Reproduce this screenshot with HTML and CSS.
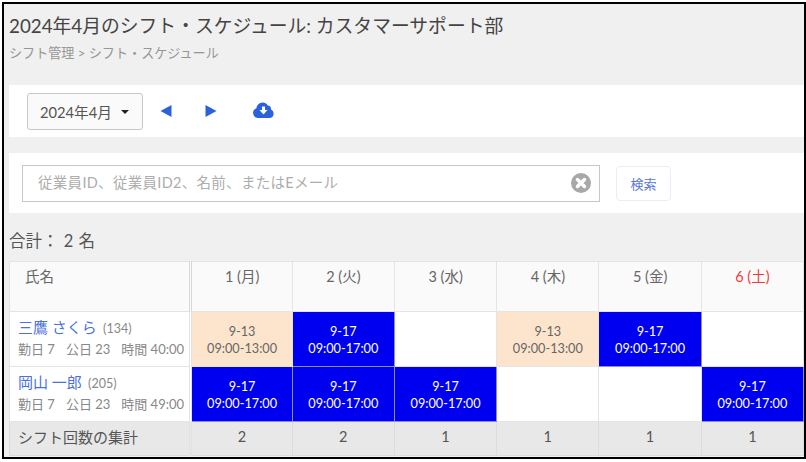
FILE: index.html
```html
<!DOCTYPE html>
<html lang="ja">
<head>
<meta charset="utf-8">
<title>シフト・スケジュール</title>
<link rel="stylesheet" href="styles.css">
</head>
<body>
<div class="frame">
  <header class="head">
    <h1 class="title">2024年4月のシフト・スケジュール: カスタマーサポート部</h1>
    <p class="crumb">シフト管理 &gt; シフト・スケジュール</p>
  </header>
  <section class="toolbar">
    <button class="month">2024年4月<span class="caret"></span></button>
    <svg class="arrow arrow-prev" width="12" height="14" viewBox="0 0 12 14"><path d="M0.500 7 11.500 1V13Z"/></svg>
    <svg class="arrow arrow-next" width="12" height="14" viewBox="0 0 12 14"><path d="M0.500 1 11.500 7 0.500 13Z"/></svg>
    <svg class="cloud" width="21" height="16" viewBox="0 0 21 16"><path class="cloud-body" d="M5 16A5 5 0 0 1 3.4 6.3 6.2 6.2 0 0 1 9.5 0.5 6 6 0 0 1 14.8 3.6 3.4 3.4 0 0 1 18 7.6 4.4 4.4 0 0 1 16.500 16Z"/><path class="cloud-arrow" d="M9 4.500H12V8H14.500L10.500 12.500 6.500 8H9Z"/></svg>
  </section>
  <section class="searchbar">
    <div class="search">
      <span class="placeholder">従業員ID、従業員ID2、名前、またはEメール</span>
      <svg class="clear" width="20" height="20" viewBox="0 0 20 20"><circle class="clear-disc" cx="10" cy="10" r="10"/><path class="clear-x" d="M6.500 6.500 13.500 13.500M13.500 6.500 6.500 13.500"/></svg>
    </div>
    <button class="go">検索</button>
  </section>
  <p class="total">合計： 2 名</p>
  <table class="grid">
    <colgroup><col class="c-name"><col class="c-d1"><col class="c-d"><col class="c-d"><col class="c-d"><col class="c-d"><col class="c-d"></colgroup>
    <thead>
      <tr>
        <th class="th-name">氏名</th>
        <th>1 (月)</th><th>2 (火)</th><th>3 (水)</th><th>4 (木)</th><th>5 (金)</th><th class="sat">6 (土)</th>
      </tr>
    </thead>
    <tbody>
      <tr>
        <td class="person"><a class="pname">三鷹 さくら</a> <span class="pid">(134)</span><div class="stats"><span>勤日 7</span><span>公日 23</span><span>時間 40:00</span></div></td>
        <td class="half">9-13<br>09:00-13:00</td>
        <td class="full">9-17<br>09:00-17:00</td>
        <td></td>
        <td class="half">9-13<br>09:00-13:00</td>
        <td class="full">9-17<br>09:00-17:00</td>
        <td></td>
      </tr>
      <tr>
        <td class="person"><a class="pname">岡山 一郎</a> <span class="pid">(205)</span><div class="stats"><span>勤日 7</span><span>公日 23</span><span>時間 49:00</span></div></td>
        <td class="full">9-17<br>09:00-17:00</td>
        <td class="full">9-17<br>09:00-17:00</td>
        <td class="full">9-17<br>09:00-17:00</td>
        <td></td>
        <td></td>
        <td class="full">9-17<br>09:00-17:00</td>
      </tr>
    </tbody>
    <tfoot>
      <tr>
        <td class="foot-name">シフト回数の集計</td>
        <td>2</td><td>2</td><td>1</td><td>1</td><td>1</td><td>1</td>
      </tr>
    </tfoot>
  </table>
</div>
</body>
</html>
```
FILE: styles.css
```css
* { box-sizing: border-box; }
html, body { margin: 0; padding: 0; background: #fff; }
body {
  font-family: Lato, "Noto Sans CJK JP", sans-serif;
  color: #444;
  width: 806px;
  height: 462px;
  overflow: hidden;
}
.frame {
  margin: 2px 0 0 2px;
  width: 804px;
  height: 457px;
  border: 2px solid #000;
  background: #f0f0f0;
  overflow: hidden;
}
.head { padding: 8px 0 0 5px; height: 81px; }
.title {
  margin: 0;
  font-size: 18.800px;
  font-weight: 400;
  line-height: 28px;
  color: #444;
  white-space: nowrap;
}
.crumb {
  margin: 3px 0 0;
  font-size: 13.100px;
  line-height: 20px;
  color: #969696;
}
.toolbar {
  margin-left: 5px;
  height: 52px;
  background: #fff;
  display: flex;
  align-items: center;
  padding: 1px 0 0 18px;
}
.month {
  width: 116px;
  height: 37px;
  padding: 0 0 0 12px;
  display: flex;
  align-items: center;
  background: #fafafa;
  border: 1px solid #c4c8cc;
  border-radius: 3px;
  font: inherit;
  font-size: 14.700px;
  color: #555;
}
.caret {
  margin-left: 9px;
  border-left: 4px solid transparent;
  border-right: 4px solid transparent;
  border-top: 4px solid #222;
}
.arrow { fill: #2a62dd; margin-top: -1px; }
.arrow-prev { margin-left: 17px; }
.arrow-next { margin-left: 33px; }
.cloud { margin-left: 36px; margin-top: -3px; }
.cloud-body { fill: #2a62dd; }
.cloud-arrow { fill: #fff; }
.searchbar {
  margin: 16px 0 0 5px;
  height: 60px;
  background: #fff;
  display: flex;
  align-items: center;
  padding-left: 13px;
}
.search {
  width: 578px;
  height: 37px;
  border: 1px solid #c2c9cc;
  display: flex;
  align-items: center;
  justify-content: space-between;
  padding: 0 8px 0 15px;
}
.placeholder { font-size: 14.500px; letter-spacing: 0.3px; color: #adadad; padding-bottom: 4px; }
.clear-disc { fill: #a8a8a8; }
.clear-x { stroke: #fff; stroke-width: 3.500; stroke-linecap: round; fill: none; }
.go {
  margin-left: 16px;
  width: 55px;
  height: 35px;
  padding: 0;
  background: #fff;
  border: 1px solid #e6edfb;
  border-radius: 4px;
  font: inherit;
  font-size: 13px;
  color: #5a78dc;
}
.total {
  margin: 0;
  padding: 16px 0 0 5px;
  height: 48px;
  font-size: 16.500px;
  word-spacing: 1px;
  line-height: 24px;
  color: #555;
}
.grid {
  margin-left: 5px;
  width: 795px;
  height: 195px;
  table-layout: fixed;
  border-collapse: collapse;
  border-top: 1px solid #c8ced2;
  border-left: 1px solid #c8ced2;
  font-size: 13px;
}
.c-name { width: 181px; }
.c-d1 { width: 101px; }
.c-d { width: 102px; }
thead tr { height: 50px; }
tbody tr { height: 55px; }
tfoot tr { height: 34px; }
th, td {
  border: 1px solid #e4e4e4;
  padding: 0;
  text-align: center;
}
th {
  background: #fafafa;
  font-weight: 400;
  font-size: 14.500px;
  color: #666;
  vertical-align: top;
  padding-top: 4px;
  line-height: 22px;
}
.th-name { text-align: left; padding-left: 15px; border-right: 3px double #d8d8d8; }
th.sat { color: #f23a3a; }
tbody td { background: #fff; line-height: 17px; font-size: 12.700px; padding-top: 1px; }
td.person, td.foot-name { text-align: left; border-right: 3px double #e2e2e2; }
td.person { padding: 0 0 3px 8px; line-height: 20px; }
.pname { font-size: 15px; color: #4a72dc; }
.pid { font-size: 12.500px; color: #888; margin-left: 3px; }
.stats { display: flex; gap: 11px; font-size: 13px; color: #888; white-space: nowrap; }
td.half { background: #fde5cd; color: #666; }
td.full { background: #0000f0; color: #fff; border-color: #8a8af0; }
tfoot td { background: #e8e8e8; font-size: 14.500px; color: #555; border-color: #dcdcdc; padding-bottom: 5px; }
td.foot-name { padding-left: 8px; font-size: 15px; }
```
